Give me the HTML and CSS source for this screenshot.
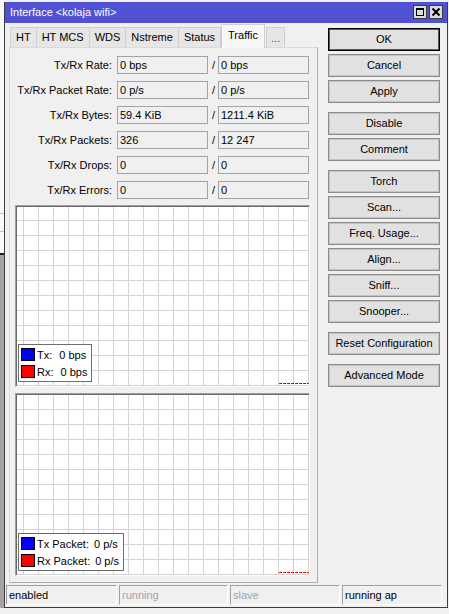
FILE: index.html
```html
<!DOCTYPE html>
<html>
<head>
<meta charset="utf-8">
<link rel="stylesheet" href="styles.css">
</head>
<body>
<div class="win">
  <div class="titlebar">
    <span class="title">Interface &lt;kolaja wifi&gt;</span>
    <div class="tbtns">
      <span class="tb"><svg width="12" height="12" viewBox="0 0 12 12"><rect x="2.5" y="2.5" width="7" height="7" fill="none" stroke="#000" stroke-width="1"/><rect x="2" y="2" width="8" height="2" fill="#000"/></svg></span>
      <span class="tb"><svg width="12" height="12" viewBox="0 0 12 12"><path d="M2.5 2.5 L9.5 9.5 M9.5 2.5 L2.5 9.5" stroke="#000" stroke-width="2"/></svg></span>
    </div>
  </div>
  <div class="main">
    <div class="left">
      <div class="tabs">
        <span class="tab">HT</span>
        <span class="tab">HT MCS</span>
        <span class="tab">WDS</span>
        <span class="tab">Nstreme</span>
        <span class="tab">Status</span>
        <span class="tab sel">Traffic</span>
        <span class="tab more">...</span>
      </div>
      <div class="panel">
        <div class="rows">
          <span class="lbl">Tx/Rx Rate:</span><span class="fld">0 bps</span><span class="sl">/</span><span class="fld">0 bps</span>
          <span class="lbl">Tx/Rx Packet Rate:</span><span class="fld">0 p/s</span><span class="sl">/</span><span class="fld">0 p/s</span>
          <span class="lbl">Tx/Rx Bytes:</span><span class="fld">59.4 KiB</span><span class="sl">/</span><span class="fld">1211.4 KiB</span>
          <span class="lbl">Tx/Rx Packets:</span><span class="fld">326</span><span class="sl">/</span><span class="fld">12 247</span>
          <span class="lbl">Tx/Rx Drops:</span><span class="fld">0</span><span class="sl">/</span><span class="fld">0</span>
          <span class="lbl">Tx/Rx Errors:</span><span class="fld">0</span><span class="sl">/</span><span class="fld">0</span>
        </div>
        <div class="graph g1">
          <div class="legend">
            <div class="lrow"><span class="sq tx"></span><span>Tx:</span><span class="val">0 bps</span></div>
            <div class="lrow"><span class="sq rx"></span><span>Rx:</span><span class="val">0 bps</span></div>
          </div>
          <span class="dots"></span>
        </div>
        <div class="graph g2">
          <div class="legend">
            <div class="lrow"><span class="sq tx"></span><span>Tx Packet:</span><span class="val v2">0 p/s</span></div>
            <div class="lrow"><span class="sq rx"></span><span>Rx Packet:</span><span class="val v2">0 p/s</span></div>
          </div>
          <span class="dots"></span>
        </div>
      </div>
    </div>
    <div class="btns">
      <span class="btn def">OK</span>
      <span class="btn">Cancel</span>
      <span class="btn">Apply</span>
      <span class="btn grp">Disable</span>
      <span class="btn">Comment</span>
      <span class="btn grp">Torch</span>
      <span class="btn">Scan...</span>
      <span class="btn">Freq. Usage...</span>
      <span class="btn">Align...</span>
      <span class="btn">Sniff...</span>
      <span class="btn">Snooper...</span>
      <span class="btn grp">Reset Configuration</span>
      <span class="btn grp">Advanced Mode</span>
    </div>
  </div>
  <div class="status">
    <span class="cell">enabled</span>
    <span class="cell dim">running</span>
    <span class="cell dim">slave</span>
    <span class="cell">running ap</span>
  </div>
</div>
</body>
</html>
```
FILE: styles.css
```css
* { box-sizing: border-box; }
html, body { margin: 0; padding: 0; }
body {
  width: 449px;
  height: 614px;
  overflow: hidden;
  font-family: "Liberation Sans", Arial, sans-serif;
  font-size: 11px;
  color: #000;
  background-color: #f0f0f0;
  background-image: linear-gradient(to bottom, #f8f8f8 0 213px, #c4c4c4 213px 214px, #f8f8f8 214px 231px, #c4c4c4 231px 232px, #f8f8f8 232px 253px, #1e1e1e 253px 255px, #a3a3a3 255px 608px, #f0f0f0 608px);
  background-size: 4px 100%;
  background-repeat: no-repeat;
  padding-top: 2px;
  padding-left: 4px;
}
.win {
  width: 444px;
  height: 606px;
  display: flex;
  flex-direction: column;
  background: #f0f0f0;
  border: 1px solid #3c3c3c;
  border-top: none;
}
.titlebar {
  height: 21px;
  flex: none;
  background: #5151d3;
  display: flex;
  align-items: flex-start;
  justify-content: space-between;
  padding: 0 4px 0 5px;
}
.title {
  color: #fff;
  line-height: 21px;
}
.tbtns {
  display: flex;
  gap: 2px;
  padding-top: 3px;
}
.tb {
  width: 14px;
  height: 14px;
  background: #dcdcdc;
  border: 1px solid #3a3a3a;
  display: flex;
  align-items: center;
  justify-content: center;
}
.tb svg { display: block; }
.main {
  height: 560px;
  flex: none;
  display: flex;
  padding-left: 4px;
  gap: 10px;
}
.left {
  width: 309px;
  padding-top: 1px;
  display: flex;
  flex-direction: column;
}
.tabs {
  height: 23px;
  display: flex;
  align-items: flex-end;
  padding-left: 1px;
}
.tab {
  height: 20px;
  line-height: 19px;
  padding: 0 5px;
  background: #e6e6e6;
  border: 1px solid #cfcfcf;
  border-bottom: none;
  margin-right: -1px;
  white-space: nowrap;
}
.tab.sel {
  height: 24px;
  line-height: 21px;
  background: #f7f7f7;
  margin: 0 1px -1px 1px;
  position: relative;
  z-index: 1;
  padding: 0 6px;
}
.tab.more {
  padding: 0 4px;
  color: #444;
  line-height: 21px;
}
.panel {
  height: 536px;
  background: #f0f0f0;
  border: 1px solid #dadada;
  border-right-color: #adadad;
  border-bottom-color: #adadad;
  padding: 8px 0 6px 5px;
  display: flex;
  flex-direction: column;
}
.rows {
  display: grid;
  grid-template-columns: 107px 91px 10px 91px;
  grid-auto-rows: 18px;
  row-gap: 7px;
  margin-left: -5px;
  align-items: center;
}
.lbl {
  text-align: right;
  padding-right: 5px;
  white-space: nowrap;
}
.fld {
  height: 18px;
  line-height: 16px;
  border: 1px solid #a3a3a3;
  background: #f0f0f0;
  padding-left: 2px;
  white-space: nowrap;
}
.sl {
  text-align: center;
  padding-left: 1px;
}
.graph {
  width: 295px;
  background-color: #fff;
  background-image:
    linear-gradient(to left, #d4d4d4 1px, transparent 1px),
    linear-gradient(to top, #d4d4d4 1px, transparent 1px);
  background-size: 15px 15px;
  background-position: right bottom;
  border: 1px solid;
  border-color: #a0a0a0 #fdfdfd #fdfdfd #a0a0a0;
  box-shadow: inset 1px 1px 0 #696969;
  display: flex;
  align-items: flex-end;
  justify-content: space-between;
  padding: 0 0 3px 2px;
}
.g1 { height: 182px; margin-top: 6px; }
.g2 { height: 183px; margin-top: 6px; }
.legend {
  background: #fff;
  border: 1px solid #6e6e6e;
  padding: 1px 4px 1px 2px;
  margin-bottom: 1px;
}
.lrow {
  display: flex;
  align-items: center;
  height: 17px;
  white-space: nowrap;
}
.sq {
  width: 14px;
  height: 13px;
  border: 1px solid #000;
  margin-right: 2px;
}
.sq.tx { background: #0000ff; }
.sq.rx { background: #ff0000; }
.val { margin-left: 7px; }
.val.v2 { margin-left: 5px; }
.dots {
  width: 30px;
  height: 1px;
  margin-bottom: -1px;
  background: repeating-linear-gradient(to right, #ff0000 0 2px, #0000ff 2px 3px, #ffffff 3px 4px);
}
.btns {
  width: 112px;
  padding-top: 5px;
  display: flex;
  flex-direction: column;
  gap: 3px;
}
.btn {
  height: 23px;
  line-height: 21px;
  text-align: center;
  background: #e1e1e1;
  border: 1px solid #8c8c8c;
  box-shadow: inset 0 0 0 1px #c4c4c4;
  white-space: nowrap;
}
.btn.def {
  border-color: #000;
  box-shadow: inset 0 0 0 1px #5a5a5a;
}
.btn.grp { margin-top: 6px; }
.status {
  height: 24px;
  flex: none;
  display: flex;
  gap: 2px;
  padding: 2px 0 2px 1px;
}
.cell {
  height: 20px;
  line-height: 18px;
  border: 1px solid;
  border-color: #a0a0a0 #fff #fff #a0a0a0;
  padding-left: 2px;
  white-space: nowrap;
}
.cell:nth-child(1) { width: 111px; }
.cell:nth-child(2) { width: 109px; }
.cell:nth-child(3) { width: 110px; }
.cell:nth-child(4) { width: 100px; }
.cell.dim { color: #a3a3a3; }
```
